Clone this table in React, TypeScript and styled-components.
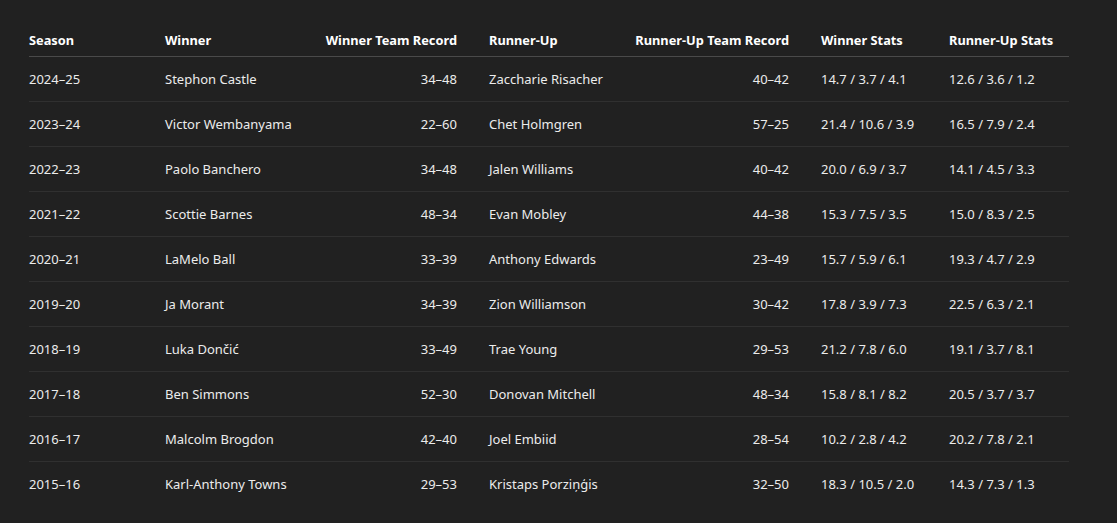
import styled, { createGlobalStyle } from "styled-components";

type Row = {
  season: string;
  winner: string;
  winnerRecord: string;
  runnerUp: string;
  runnerUpRecord: string;
  winnerStats: string;
  runnerUpStats: string;
};

const rows: Row[] = [
  { season: "2024–25", winner: "Stephon Castle", winnerRecord: "34–48", runnerUp: "Zaccharie Risacher", runnerUpRecord: "40–42", winnerStats: "14.7 / 3.7 / 4.1", runnerUpStats: "12.6 / 3.6 / 1.2" },
  { season: "2023–24", winner: "Victor Wembanyama", winnerRecord: "22–60", runnerUp: "Chet Holmgren", runnerUpRecord: "57–25", winnerStats: "21.4 / 10.6 / 3.9", runnerUpStats: "16.5 / 7.9 / 2.4" },
  { season: "2022–23", winner: "Paolo Banchero", winnerRecord: "34–48", runnerUp: "Jalen Williams", runnerUpRecord: "40–42", winnerStats: "20.0 / 6.9 / 3.7", runnerUpStats: "14.1 / 4.5 / 3.3" },
  { season: "2021–22", winner: "Scottie Barnes", winnerRecord: "48–34", runnerUp: "Evan Mobley", runnerUpRecord: "44–38", winnerStats: "15.3 / 7.5 / 3.5", runnerUpStats: "15.0 / 8.3 / 2.5" },
  { season: "2020–21", winner: "LaMelo Ball", winnerRecord: "33–39", runnerUp: "Anthony Edwards", runnerUpRecord: "23–49", winnerStats: "15.7 / 5.9 / 6.1", runnerUpStats: "19.3 / 4.7 / 2.9" },
  { season: "2019–20", winner: "Ja Morant", winnerRecord: "34–39", runnerUp: "Zion Williamson", runnerUpRecord: "30–42", winnerStats: "17.8 / 3.9 / 7.3", runnerUpStats: "22.5 / 6.3 / 2.1" },
  { season: "2018–19", winner: "Luka Dončić", winnerRecord: "33–49", runnerUp: "Trae Young", runnerUpRecord: "29–53", winnerStats: "21.2 / 7.8 / 6.0", runnerUpStats: "19.1 / 3.7 / 8.1" },
  { season: "2017–18", winner: "Ben Simmons", winnerRecord: "52–30", runnerUp: "Donovan Mitchell", runnerUpRecord: "48–34", winnerStats: "15.8 / 8.1 / 8.2", runnerUpStats: "20.5 / 3.7 / 3.7" },
  { season: "2016–17", winner: "Malcolm Brogdon", winnerRecord: "42–40", runnerUp: "Joel Embiid", runnerUpRecord: "28–54", winnerStats: "10.2 / 2.8 / 4.2", runnerUpStats: "20.2 / 7.8 / 2.1" },
  { season: "2015–16", winner: "Karl-Anthony Towns", winnerRecord: "29–53", runnerUp: "Kristaps Porziņģis", runnerUpRecord: "32–50", winnerStats: "18.3 / 10.5 / 2.0", runnerUpStats: "14.3 / 7.3 / 1.3" },
];

const widths = [120, 160, 164, 146, 186, 128, 136];

export default function App() {
  return (
    <>
      <GlobalStyle />
      <Page>
        <CutOff>records.</CutOff>
        <Table>
          <colgroup>
            {widths.map((w, i) => (
              <col key={i} style={{ width: w }} />
            ))}
          </colgroup>
          <thead>
            <tr>
              <Th>Season</Th>
              <Th>Winner</Th>
              <Th $right>Winner Team Record</Th>
              <Th>Runner-Up</Th>
              <Th $right>Runner-Up Team Record</Th>
              <Th>Winner Stats</Th>
              <Th>Runner-Up Stats</Th>
            </tr>
          </thead>
          <tbody>
            {rows.map((r) => (
              <Tr key={r.season}>
                <Td>{r.season}</Td>
                <Td>{r.winner}</Td>
                <Td $right>{r.winnerRecord}</Td>
                <Td>{r.runnerUp}</Td>
                <Td $right>{r.runnerUpRecord}</Td>
                <Td>{r.winnerStats}</Td>
                <Td>{r.runnerUpStats}</Td>
              </Tr>
            ))}
          </tbody>
        </Table>
      </Page>
    </>
  );
}

const GlobalStyle = createGlobalStyle`
  html, body {
    margin: 0;
    background: #212121;
  }
  body {
    font-family: "Noto Sans", "Open Sans", sans-serif;
    color: #ececec;
  }
`;

const Page = styled.div`
  padding: 0 48px 0 29px;
  overflow: hidden;
  height: 523px;
`;

const CutOff = styled.p`
  margin: -15px 0 0;
  font-size: 13px;
  font-weight: 700;
  line-height: 20px;
`;

const Table = styled.table`
  margin-top: 15px;
  width: 1040px;
  table-layout: fixed;
  border-collapse: collapse;
  font-size: 13px;
  line-height: 20px;
`;

const Th = styled.th<{ $right?: boolean }>`
  padding: 10px 16px 6px;
  text-align: ${(p) => (p.$right ? "right" : "left")};
  font-size: 12.8px;
  font-weight: 700;
  color: #ffffff;
  white-space: nowrap;
  border-bottom: 1px solid #4a4a4a;

  &:first-child {
    padding-left: 0;
  }
`;

const Tr = styled.tr`
  border-bottom: 1px solid #303030;

  &:last-child {
    border-bottom: none;
  }
`;

const Td = styled.td<{ $right?: boolean }>`
  padding: 12px 16px;
  text-align: ${(p) => (p.$right ? "right" : "left")};
  white-space: nowrap;

  &:first-child {
    padding-left: 0;
  }
`;
